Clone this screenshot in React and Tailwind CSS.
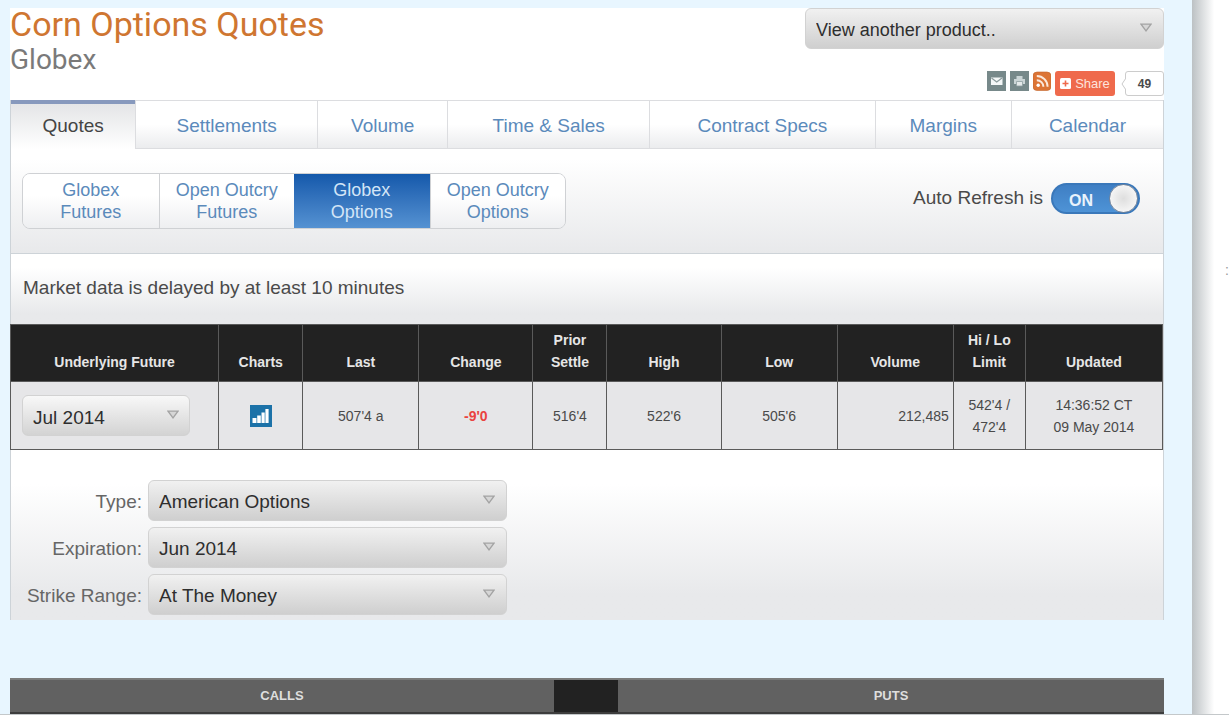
import React from "react";

const tabs = [
  { label: "Quotes", size: "flex-[125]", active: true },
  { label: "Settlements", size: "flex-[182]" },
  { label: "Volume", size: "flex-[130]" },
  { label: "Time & Sales", size: "flex-[202]" },
  { label: "Contract Specs", size: "flex-[226]" },
  { label: "Margins", size: "flex-[136]" },
  { label: "Calendar", size: "flex-[152]" },
];

const venues = [
  { top: "Globex", bottom: "Futures" },
  { top: "Open Outcry", bottom: "Futures" },
  { top: "Globex", bottom: "Options", active: true },
  { top: "Open Outcry", bottom: "Options" },
];

const columns = [
  { label: "Underlying Future", width: "w-[208px]" },
  { label: "Charts", width: "w-[84px]" },
  { label: "Last", width: "w-[116px]" },
  { label: "Change", width: "w-[114px]" },
  { label: "Prior Settle", width: "w-[74px]" },
  { label: "High", width: "w-[114px]" },
  { label: "Low", width: "w-[116px]" },
  { label: "Volume", width: "w-[116px]" },
  { label: "Hi / Lo Limit", width: "w-[72px]" },
  { label: "Updated", width: "w-[137px]" },
];

const filters = [
  { id: "type", label: "Type:", value: "American Options" },
  { id: "expiration", label: "Expiration:", value: "Jun 2014" },
  { id: "strike", label: "Strike Range:", value: "At The Money" },
];

function Select({ id, value, label, arrow = "right-3", tone = "from-[#f1f1f1] to-[#cfcfcf]", size = "text-[19px]" }) {
  return (
    <div className="relative w-full">
      <select
        id={id}
        aria-label={label}
        className={`block h-[41px] w-full appearance-none rounded-md border border-[#d2d2d2] bg-linear-to-b pl-[10px] pr-8 pt-1 text-[#2e2e2e] ${tone} ${size}`}
      >
        <option>{value}</option>
      </select>
      <svg
        className={`pointer-events-none absolute top-[15px] h-[9px] w-3 ${arrow}`}
        viewBox="0 0 12 9"
        fill="#d6d6d6"
        stroke="#a3a3a3"
        strokeWidth="1.3"
      >
        <path d="M1 1.2h10L6 7.8z" />
      </svg>
    </div>
  );
}

function ShareBar() {
  return (
    <div className="flex items-start gap-1">
      <a href="#email" aria-label="Email">
        <svg className="h-5 w-[19px]" viewBox="0 0 19 20">
          <rect width="19" height="20" fill="#77898a" />
          <rect x="4" y="6.500" width="11.500" height="7.500" fill="#f4f7f7" />
          <path d="M4.500 7l5.200 4 5.300-4" fill="none" stroke="#8b9b9c" strokeWidth="1.200" />
        </svg>
      </a>
      <a href="#print" aria-label="Print">
        <svg className="h-5 w-[19px]" viewBox="0 0 19 20">
          <rect width="19" height="20" fill="#77898a" />
          <path d="M6.500 5h6v3h-6zM4 8h11v5H4z" fill="#cbd5d6" />
          <path d="M6.500 10.500h6V15h-6z" fill="#e5eaea" stroke="#8fa0a1" strokeWidth=".8" />
        </svg>
      </a>
      <a href="#rss" aria-label="RSS feed">
        <svg className="h-5 w-[18px]" viewBox="0 0 18 20">
          <rect y="1" width="18" height="18.500" rx="4" fill="#dc7435" stroke="#c2652c" strokeWidth=".6" />
          <circle cx="5.200" cy="14.300" r="1.700" fill="#fff" />
          <path d="M3.800 9.200a6.600 6.600 0 0 1 6.600 6.600M3.800 5a10.800 10.800 0 0 1 10.800 10.800" fill="none" stroke="#fbe9dc" strokeWidth="2" />
        </svg>
      </a>
      <button className="flex h-[25px] w-[60px] items-center justify-center gap-1 rounded-[3px] bg-[#ef6a4c] text-[13px] text-[#fde3dc]">
        <svg className="h-[11px] w-[11px]" viewBox="0 0 11 11">
          <rect width="11" height="11" rx="1.500" fill="#fff" />
          <path d="M5.500 2.500v6M2.500 5.500h6" stroke="#ef6a4c" strokeWidth="1.600" />
        </svg>
        Share
      </button>
      <div className="ml-[2px] flex items-center">
        <svg className="z-10 -mr-px h-[14px] w-[5px]" viewBox="0 0 5 14">
          <path d="M5 1L1 7l4 6" fill="#fff" stroke="#c9c9c9" />
        </svg>
        <span className="flex h-[25px] w-[39px] items-center justify-center rounded-[3px] border border-[#cccccc] bg-white text-[12px] font-bold text-[#4a4a4a]">
          49
        </span>
      </div>
    </div>
  );
}

export default function App() {
  return (
    <div className="min-h-screen bg-white font-['Liberation_Sans',Arial,sans-serif] text-[#4a4a4a]">
      <div className="flex border-b border-[#c4c8ca]">
        <main className="min-w-0 flex-1 bg-[#e8f6ff] pl-[10px] pr-7 pt-2">
          <header className="flex h-[92px] justify-between bg-white">
            <div className="font-[Roboto,sans-serif]">
              <h1 className="text-[34px] leading-8 text-[#cf7631]">Corn Options Quotes</h1>
              <h2 className="text-[28px] leading-10 text-[#7a7a7a]">Globex</h2>
            </div>
            <div className="flex w-[359px] flex-col items-end justify-between pb-1">
              <Select id="product" label="Product" value="View another product.." size="text-[18px]" />
              <ShareBar />
            </div>
          </header>

          <nav className="flex h-[49px] border-x border-[#cdd3d8]">
            {tabs.map((t) => (
              <a
                key={t.label}
                href="#tab"
                className={
                  t.active
                    ? `${t.size} flex items-center justify-center border-t-4 border-[#8799bd] bg-linear-to-b from-[#e4e5e7] to-white text-[19px] text-[#444444]`
                    : `${t.size} flex items-center justify-center border-b border-l border-t border-[#dcdde0] bg-linear-to-b from-white from-50% to-[#ebecee] pt-[3px] text-[19px] text-[#5b8abb]`
                }
              >
                {t.label}
              </a>
            ))}
          </nav>

          <section className="flex items-start justify-between border-x border-b border-[#cdd3d8] bg-linear-to-b from-white from-10% to-[#e8e9eb] pb-6 pl-[11px] pr-[23px] pt-6">
            <div className="grid w-[544px] grid-cols-4 overflow-hidden rounded-lg border border-[#cfd1d4]">
              {venues.map((v, i) => (
                <button
                  key={i}
                  className={
                    v.active
                      ? "h-[54px] bg-linear-to-b from-[#1459ab] to-[#5592d2] text-[18px] leading-[22px] text-[#d3e5f7]"
                      : "h-[54px] border-l border-[#cfd1d4] bg-linear-to-b from-white from-40% to-[#eeeff1] text-[18px] leading-[22px] text-[#5b8abb] first:border-l-0"
                  }
                >
                  {v.top}
                  <br />
                  {v.bottom}
                </button>
              ))}
            </div>
            <label className="mt-[10px] flex items-center gap-2 text-[19px] text-[#4a4a4a]">
              Auto Refresh is
              <input type="checkbox" role="switch" defaultChecked className="peer sr-only" />
              <span className="flex h-[31px] w-[89px] items-center justify-between rounded-full border-2 border-[#3a78ba] bg-linear-to-b from-[#3f7fc4] to-[#4e93d6] pl-4 text-[16px] text-[#e9f3fc]">
                <span className="pt-1 font-bold">ON</span>
                <span className="h-[29px] w-[29px] rounded-full border border-[#75859b] bg-radial from-[#dedede] to-white" />
              </span>
            </label>
          </section>

          <section className="h-[70px] border-x border-[#cdd3d8] bg-linear-to-b from-white from-20% to-[#e8e9eb] to-85% pl-3 pt-5">
            <p className="text-[19px] leading-7">Market data is delayed by at least 10 minutes</p>
          </section>

          <div className="border-r border-[#cdd3d8]">
            <table className="w-full table-fixed border-collapse text-center text-[14px]">
              <thead>
                <tr className="h-[57px] bg-[#222222] text-[#e6e6e6]">
                  {columns.map((c) => (
                    <th
                      key={c.label}
                      scope="col"
                      className={`${c.width} border border-[#5a5a5a] px-3 pb-2 align-bottom leading-[22px]`}
                    >
                      {c.label}
                    </th>
                  ))}
                </tr>
              </thead>
              <tbody>
                <tr className="h-[68px] bg-[#e6e6e8] [&>td]:border [&>td]:border-[#5a5a5a] [&>td]:leading-[22px]">
                  <td className="pl-[11px] pr-7">
                    <Select id="future" label="Underlying Future" value="Jul 2014" arrow="right-[11px]" tone="from-[#f8f8f8] to-[#d3d3d3]" />
                  </td>
                  <td>
                    <svg className="mx-auto h-[22px] w-[22px]" viewBox="0 0 22 22">
                      <rect width="22" height="22" fill="#1c72a8" />
                      <path d="M2.500 13h4v5h-4zM7.200 10.500h3.600V18H7.200zM11.500 7.500h3.200V18h-3.200zM15.400 4h3.200v14h-3.200z" fill="#fff" />
                    </svg>
                  </td>
                  <td>507'4 a</td>
                  <td className="font-bold text-[#ea4340]">-9'0</td>
                  <td>516'4</td>
                  <td>522'6</td>
                  <td>505'6</td>
                  <td className="pr-1 text-right">212,485</td>
                  <td>
                    542'4 /<br />472'4
                  </td>
                  <td>
                    14:36:52 CT
                    <br />
                    09 May 2014
                  </td>
                </tr>
              </tbody>
            </table>
          </div>

          <form className="flex flex-col gap-[6px] border-x border-[#cdd3d8] bg-linear-to-b from-white from-20% to-[#e8e9eb] to-85% pb-[5px] pt-[30px]">
            {filters.map((f) => (
              <div key={f.id} className="flex items-center gap-[6px]">
                <label htmlFor={f.id} className="w-[131px] pt-1 text-right text-[19px] text-[#666666]">
                  {f.label}
                </label>
                <div className="w-[359px]">
                  <Select id={f.id} value={f.value} />
                </div>
              </div>
            ))}
          </form>

          <table className="mt-[58px] w-full table-fixed border-collapse text-[13px] text-[#dedede]">
            <thead>
              <tr className="h-[34px] border-b-2 border-t-2 border-b-[#3d3d3d] border-t-[#7c7c7c] bg-[#616161]">
                <th scope="col" className="w-[543px]">CALLS</th>
                <th className="w-16 bg-[#222222]" aria-label="Strike" />
                <th scope="col" className="w-[545px]">PUTS</th>
              </tr>
            </thead>
          </table>
        </main>
        <aside className="flex w-[37px] justify-end bg-linear-to-r from-[#bcc1c4] to-white to-60% pt-[260px] text-[14px] text-[#999999]">
          <span>:</span>
        </aside>
      </div>
    </div>
  );
}
